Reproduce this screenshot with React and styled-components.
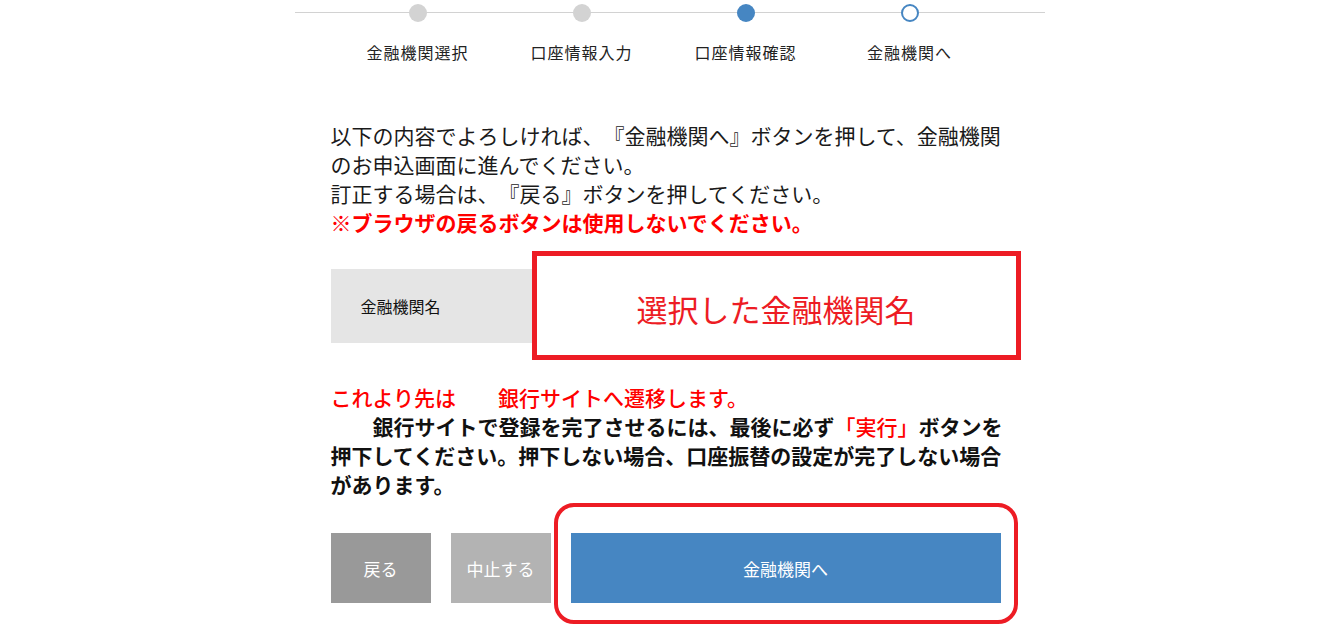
import styled, { createGlobalStyle } from "styled-components";

const steps = [
  { label: "金融機関選択", state: "done" },
  { label: "口座情報入力", state: "done" },
  { label: "口座情報確認", state: "current" },
  { label: "金融機関へ", state: "next" },
];

const App = () => {
  return (
    <>
      <GlobalStyle />
      <Page>
        <Stepper>
          {steps.map((step, i) => (
            <Step key={i}>
              <Dot state={step.state} />
              <StepLabel>{step.label}</StepLabel>
            </Step>
          ))}
        </Stepper>

        <Content>
          <Lead>
            以下の内容でよろしければ、『金融機関へ』ボタンを押して、金融機関のお申込画面に進んでください。
            <br />
            訂正する場合は、『戻る』ボタンを押してください。
            <br />
            <Warning>※ブラウザの戻るボタンは使用しないでください。</Warning>
          </Lead>

          <InfoRow>
            <InfoLabel>金融機関名</InfoLabel>
            <InfoValue>選択した金融機関名</InfoValue>
          </InfoRow>

          <Notice>
            <NoticeTitle>これより先は　　銀行サイトへ遷移します。</NoticeTitle>
            <NoticeBody>
              銀行サイトで登録を完了させるには、最後に必ず<Red>「実行」</Red>ボタンを押下してください。押下しない場合、口座振替の設定が完了しない場合があります。
            </NoticeBody>
          </Notice>

          <Actions>
            <ActionButton tone="back">戻る</ActionButton>
            <ActionButton tone="cancel">中止する</ActionButton>
            <Highlight>
              <ActionButton tone="primary">金融機関へ</ActionButton>
            </Highlight>
          </Actions>
        </Content>
      </Page>
    </>
  );
};

export default App;

const GlobalStyle = createGlobalStyle`
  body {
    margin: 0;
    background: #fff;
    font-family: "Noto Sans CJK JP", "Noto Sans", sans-serif;
    color: #1e1e1e;
    text-spacing-trim: space-all;
  }
`;

const Page = styled.div`
  width: 750px;
  margin: 0 auto;
  padding-top: 4px;
`;

const Stepper = styled.div`
  position: relative;
  display: grid;
  grid-template-columns: repeat(4, 164px);
  padding-left: 41px;

  &::before {
    content: "";
    position: absolute;
    left: 0;
    right: 0;
    top: 8px;
    height: 1px;
    background: #d2d2d2;
  }
`;

const Step = styled.div`
  display: flex;
  flex-direction: column;
  align-items: center;
`;

const Dot = styled.span`
  position: relative;
  box-sizing: border-box;
  width: 18px;
  height: 18px;
  border-radius: 50%;
  background: ${({ state }) =>
    state === "done" ? "#d3d3d3" : state === "current" ? "#4686c2" : "#fff"};
  border: ${({ state }) => (state === "next" ? "2px solid #4686c2" : "none")};
`;

const StepLabel = styled.div`
  margin-top: 19px;
  font-size: 16px;
  letter-spacing: 1px;
  line-height: 22px;
  color: #222;
`;

const Content = styled.div`
  width: 690px;
  padding-left: 36px;
  margin-top: 58px;
`;

const Lead = styled.p`
  margin: 0;
  max-width: 682px;
  font-size: 21px;
  line-height: 29px;
  color: #1a1a1a;
`;

const Warning = styled.strong`
  color: #ff0000;
  font-weight: 700;
`;

const InfoRow = styled.div`
  display: flex;
  align-items: center;
  margin-top: 14px;
`;

const InfoLabel = styled.div`
  box-sizing: border-box;
  width: 201px;
  height: 74px;
  padding-left: 30px;
  display: flex;
  align-items: center;
  background: #e5e5e5;
  font-size: 16px;
  color: #111;
`;

const InfoValue = styled.div`
  box-sizing: border-box;
  flex: 1;
  height: 109px;
  border: 5px solid #ed1c24;
  display: flex;
  align-items: center;
  justify-content: center;
  padding-top: 6px;
  font-size: 31px;
  color: #ed1c24;
`;

const Notice = styled.div`
  margin-top: 23px;
  font-size: 21px;
  line-height: 29px;
  font-weight: 700;
`;

const NoticeTitle = styled.div`
  color: #ff0000;
  font-weight: 500;
`;

const NoticeBody = styled.p`
  margin: 0;
  text-indent: 2em;
  color: #111;
`;

const Red = styled.span`
  color: #ff0000;
  font-weight: 500;
`;

const Actions = styled.div`
  display: flex;
  align-items: flex-start;
  margin-top: 4px;
`;

const toneColors = {
  back: "#999999",
  cancel: "#b3b3b3",
  primary: "#4686c2",
};

const ActionButton = styled.button`
  box-sizing: border-box;
  width: ${({ tone }) => (tone === "primary" ? "430px" : "100px")};
  height: 70px;
  margin-top: ${({ tone }) => (tone === "primary" ? "0" : "30px")};
  margin-right: ${({ tone }) => (tone === "back" ? "20px" : "0")};
  border: none;
  background: ${({ tone }) => toneColors[tone]};
  color: #fff;
  font-family: inherit;
  font-size: 17px;
  padding: 0;
`;

const Highlight = styled.div`
  margin-left: 3px;
  padding: 26px 13px 17px;
  border: 4px solid #ed1c24;
  border-radius: 20px;
`;
